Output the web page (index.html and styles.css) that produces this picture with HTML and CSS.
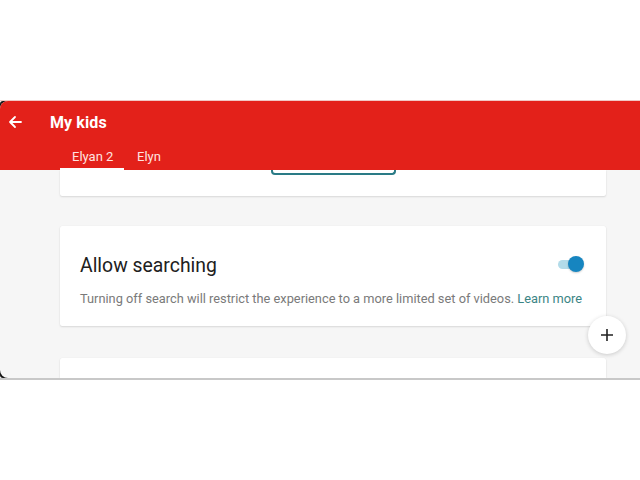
FILE: index.html
```html
<!DOCTYPE html>
<html>
<head>
<meta charset="utf-8">
<link rel="stylesheet" href="styles.css">
</head>
<body>
<div class="page">
  <div class="top-line"></div>
  <div class="bezel">
    <div class="screen">
      <header class="appbar">
        <div class="title-row">
          <svg class="back" width="16" height="16" viewBox="0 0 16 16"><path d="M14 8H3M8 3L3 8l5 5" fill="none" stroke="#fff" stroke-width="1.8" stroke-linecap="round" stroke-linejoin="round"/></svg>
          <span class="title">My kids</span>
        </div>
        <nav class="tabs">
          <span class="tab active">Elyan 2</span>
          <span class="tab">Elyn</span>
        </nav>
      </header>
      <main class="content">
        <section class="card card-top">
          <div class="outline-btn"></div>
        </section>
        <section class="card card-search">
          <div class="row">
            <h2 class="card-title">Allow searching</h2>
            <div class="toggle"><span class="track"></span><span class="thumb"></span></div>
          </div>
          <p class="desc">Turning off search will restrict the experience to a more limited set of videos. <span class="link">Learn more</span></p>
        </section>
        <section class="card card-bottom"></section>
        <div class="fab"><svg width="14" height="14" viewBox="0 0 14 14"><path d="M7 1v12M1 7h12" stroke="#222" stroke-width="1.6"/></svg></div>
      </main>
    </div>
  </div>
  <div class="bottom-line"></div>
</div>
</body>
</html>
```
FILE: styles.css
```css
html, body {
  margin: 0;
  padding: 0;
  background: #ffffff;
  font-family: Roboto, "Noto Sans", Arial, sans-serif;
}
.page {
  width: 640px;
  height: 480px;
  padding-top: 100px;
  box-sizing: border-box;
}
.top-line {
  height: 1px;
  background: #f0c8c4;
}
.bezel {
  background: #141414;
  border-radius: 3px 0 0 3px;
  height: 277px;
}
.screen {
  height: 277px;
  border-radius: 8px 0 0 8px;
  overflow: hidden;
  background: #f6f6f6;
  display: flex;
  flex-direction: column;
}
.appbar {
  background: #e3211a;
  height: 69px;
  flex: none;
  display: flex;
  flex-direction: column;
  position: relative;
  z-index: 2;
}
.title-row {
  height: 42px;
  display: flex;
  align-items: center;
  padding-left: 7px;
}
.back {
  flex: none;
}
.title {
  color: #ffffff;
  font-size: 16px;
  font-weight: 700;
  margin-left: 27px;
  letter-spacing: 0.1px;
}
.tabs {
  display: flex;
  padding-left: 60px;
  height: 27px;
}
.tab {
  color: #ffe4e0;
  font-size: 13px;
  white-space: nowrap;
  padding: 1px 0 1px 13px;
  display: flex;
  align-items: center;
  box-sizing: border-box;
  height: 27px;
}
.tab.active {
  border-bottom: 2px solid #ffffff;
  width: 64px;
  padding: 1px 0 0 12px;
}
.content {
  flex: 1;
  position: relative;
  padding: 0 34px 0 60px;
  display: flex;
  flex-direction: column;
}
.card {
  background: #ffffff;
  border-radius: 2px;
  box-shadow: 0 1px 2px rgba(0,0,0,0.12), 0 0 1px rgba(0,0,0,0.08);
}
.card-top {
  height: 26px;
  border-radius: 0 0 2px 2px;
}
.outline-btn {
  margin-left: 211px;
  width: 121px;
  height: 3px;
  border: 2px solid #2a7b86;
  border-top: none;
  border-radius: 0 0 4px 4px;
}
.card-search {
  margin-top: 30px;
  height: 100px;
  box-sizing: border-box;
  padding: 27px 22px 0 20px;
}
.row {
  display: flex;
  align-items: center;
  justify-content: space-between;
  height: 24px;
}
.card-title {
  margin: 0;
  font-size: 19.4px;
  font-weight: 400;
  color: #202020;
}
.toggle {
  position: relative;
  width: 26px;
  height: 18px;
  margin-top: -3px;
}
.track {
  position: absolute;
  left: 0;
  top: 5px;
  width: 22px;
  height: 9px;
  border-radius: 5px;
  background: #b2dbe9;
}
.thumb {
  position: absolute;
  right: 0;
  top: 1px;
  width: 16px;
  height: 16px;
  border-radius: 50%;
  background: #1685c0;
  box-shadow: 0 1px 2px rgba(0,0,0,0.2);
}
.desc {
  margin: 14px 0 0;
  font-size: 12.8px;
  color: #7a7a7a;
  white-space: nowrap;
}
.link {
  color: #3b8585;
}
.card-bottom {
  margin-top: 32px;
  flex: 1;
  border-radius: 2px 2px 0 0;
}
.fab {
  position: absolute;
  left: 588px;
  top: 146px;
  width: 38px;
  height: 38px;
  border-radius: 50%;
  background: #ffffff;
  box-shadow: 0 1px 4px rgba(0,0,0,0.18);
  display: flex;
  align-items: center;
  justify-content: center;
}
.bottom-line {
  height: 2px;
  background: #c8c8c8;
}
```
